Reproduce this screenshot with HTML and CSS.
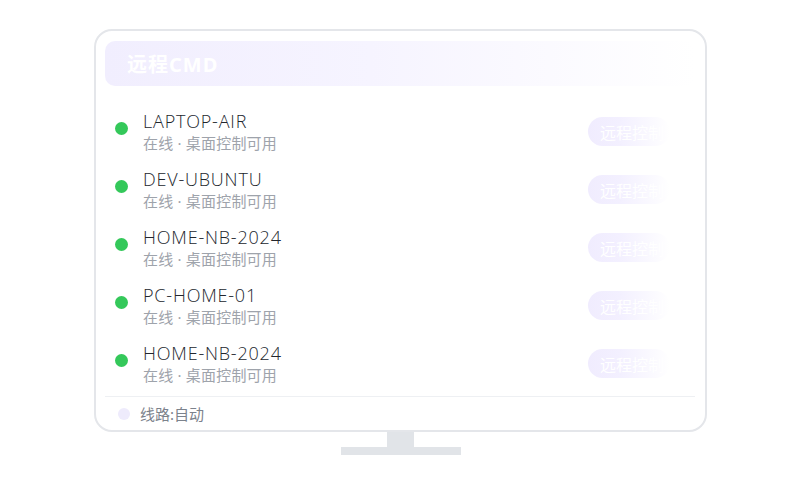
FILE: index.html
```html
<!DOCTYPE html>
<html lang="zh">
<head>
<meta charset="utf-8">
<link rel="stylesheet" href="styles.css">
</head>
<body>
<div class="scene">
  <div class="monitor">
    <div class="header"><span class="title">远程CMD</span></div>
    <div class="list">
      <div class="row">
        <span class="dot"></span>
        <div class="info"><div class="name">LAPTOP-AIR</div><div class="sub">在线 · 桌面控制可用</div></div>
        <span class="btn">远程控制</span>
      </div>
      <div class="row">
        <span class="dot"></span>
        <div class="info"><div class="name">DEV-UBUNTU</div><div class="sub">在线 · 桌面控制可用</div></div>
        <span class="btn">远程控制</span>
      </div>
      <div class="row">
        <span class="dot"></span>
        <div class="info"><div class="name">HOME-NB-2024</div><div class="sub">在线 · 桌面控制可用</div></div>
        <span class="btn">远程控制</span>
      </div>
      <div class="row">
        <span class="dot"></span>
        <div class="info"><div class="name">PC-HOME-01</div><div class="sub">在线 · 桌面控制可用</div></div>
        <span class="btn">远程控制</span>
      </div>
      <div class="row">
        <span class="dot"></span>
        <div class="info"><div class="name">HOME-NB-2024</div><div class="sub">在线 · 桌面控制可用</div></div>
        <span class="btn">远程控制</span>
      </div>
    </div>
    <div class="footer"><span class="fdot"></span><span class="ftext">线路:自动</span></div>
  </div>
  <div class="neck"></div>
  <div class="base"></div>
</div>
</body>
</html>
```
FILE: styles.css
```css
* { box-sizing: border-box; }
html, body { margin: 0; padding: 0; background: #ffffff; }
body {
  width: 800px;
  height: 500px;
  overflow: hidden;
  font-family: "Noto Sans", "Noto Sans CJK SC", sans-serif;
}
.scene {
  display: flex;
  flex-direction: column;
  align-items: center;
  padding-top: 29px;
  padding-left: 1px;
}
.monitor {
  width: 613px;
  height: 403px;
  border: 2px solid #e4e6ea;
  border-radius: 18px;
  padding: 10px 10px 0 9px;
  display: flex;
  flex-direction: column;
  background: #ffffff;
}
.header {
  height: 45px;
  border-radius: 10px;
  background: linear-gradient(90deg, #f1eefe 0%, #f6f4ff 45%, rgba(255,255,255,0) 100%);
  display: flex;
  align-items: center;
  padding-left: 22px;
  flex-shrink: 0;
}
.title {
  color: #ffffff;
  font-size: 20px;
  font-weight: 700;
  letter-spacing: 1px;
}
.list {
  margin-top: 16px;
  display: flex;
  flex-direction: column;
}
.row {
  height: 58px;
  display: flex;
  align-items: center;
  padding-left: 10px;
}
.dot {
  width: 13px;
  height: 13px;
  border-radius: 50%;
  background: #34c85a;
  flex-shrink: 0;
  margin-top: -6px;
}
.info {
  margin-left: 15px;
  flex: 1;
  display: flex;
  flex-direction: column;
}
.name {
  font-family: "Open Sans", "Noto Sans CJK SC", sans-serif;
  font-weight: 300;
  font-size: 18px;
  line-height: 22px;
  color: #22262d;
  letter-spacing: 0.8px;
}
.sub {
  font-size: 15px;
  line-height: 20px;
  color: #9ea3ab;
  margin-top: 1px;
  letter-spacing: 0.2px;
}
.btn {
  width: 82px;
  height: 29px;
  border-radius: 15px;
  margin-right: 25px;
  margin-top: 1px;
  padding-left: 12px;
  display: flex;
  align-items: center;
  font-family: "Liberation Serif", "Noto Sans CJK SC", serif;
  font-size: 16px;
  color: #ffffff;
  white-space: nowrap;
  overflow: hidden;
  background: linear-gradient(90deg, #f0ecfe 0%, #f3f0ff 40%, rgba(255,255,255,0) 100%);
}
.footer {
  margin-top: 4px;
  border-top: 1px solid #eef0f3;
  height: 34px;
  display: flex;
  align-items: center;
  padding-left: 13px;
}
.fdot {
  width: 12px;
  height: 12px;
  border-radius: 50%;
  background: #eeebfc;
}
.ftext {
  margin-left: 10px;
  font-size: 15px;
  color: #7c828c;
}
.neck {
  width: 27px;
  height: 15px;
  background: #e1e4e8;
}
.base {
  width: 120px;
  height: 8px;
  background: #e1e4e8;
}
```
